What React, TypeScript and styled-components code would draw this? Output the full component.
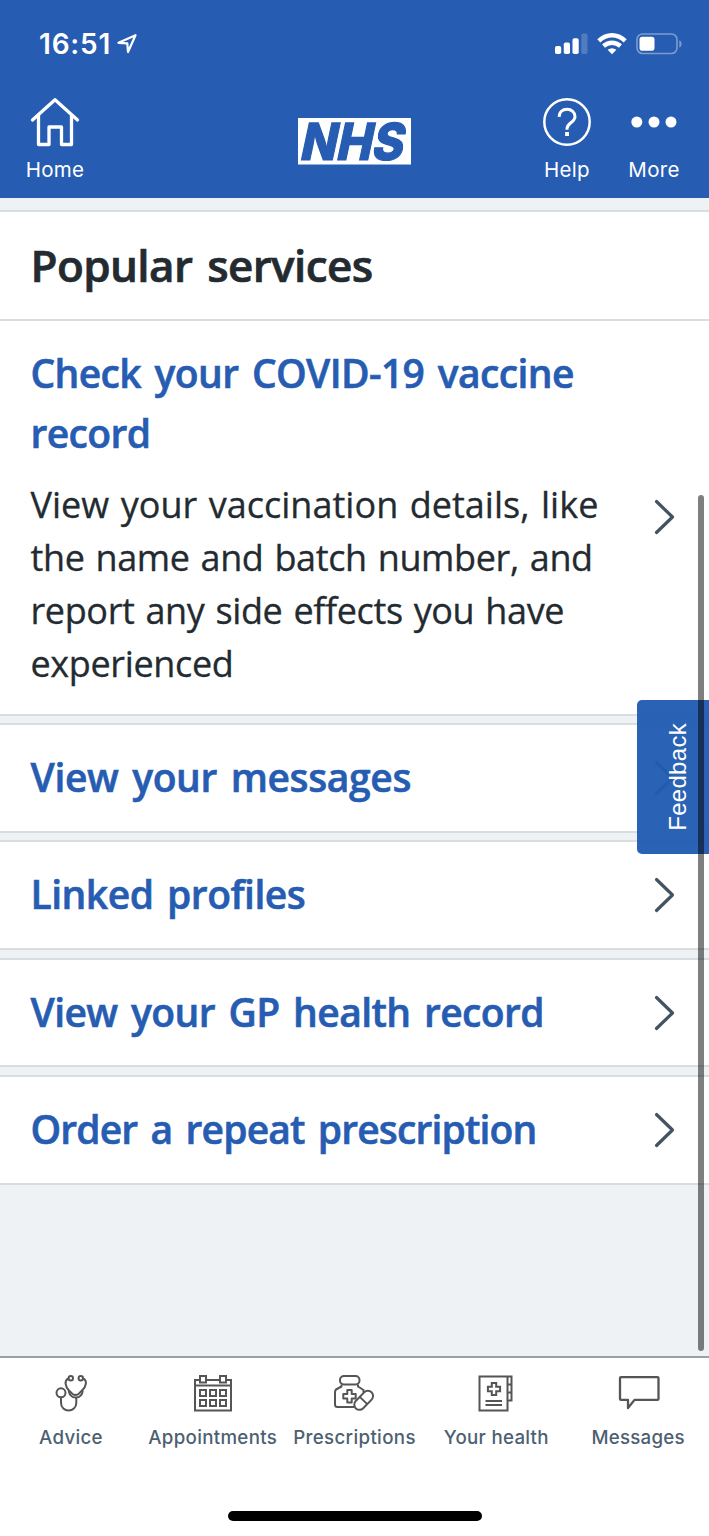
import React from "react";
import styled, { createGlobalStyle } from "styled-components";

const GlobalStyle = createGlobalStyle`
  * { box-sizing: border-box; }
  body { margin: 0; background: #fff; -webkit-font-smoothing: antialiased; }
  h1, h2, p { margin: 0; }
`;

const Screen = styled.div`
  position: relative;
  display: flex;
  flex-direction: column;
  width: 709px;
  height: 1536px;
  overflow: hidden;
  background: #eef2f4;
  font-family: "Open Sans", "Noto Sans", sans-serif;
`;

const Header = styled.header`
  flex: none;
  height: 198px;
  background: #265cb1;
  color: #fff;
  font-family: Inter, sans-serif;
`;

const StatusBar = styled.div`
  display: flex;
  align-items: center;
  justify-content: space-between;
  height: 88px;
  padding: 0 27px 0 39px;
`;

const Clock = styled.div`
  display: flex;
  align-items: center;
  gap: 6px;
  font-size: 28px;
  font-weight: 600;
  letter-spacing: 0.8px;
`;

const StatusIcons = styled.div`
  display: flex;
  align-items: center;
  gap: 9px;
`;

const TopBar = styled.div`
  display: grid;
  grid-template-columns: 110px 1fr 110px 64px 23px;
  height: 110px;
  padding-top: 8px;
`;

const TopButton = styled.div`
  display: flex;
  flex-direction: column;
  align-items: center;
  gap: 8px;
  font-size: 20.5px;
  line-height: 27px;
  letter-spacing: 0.3px;
`;

const LogoCell = styled.div`
  display: flex;
  padding: 22px 0 0 188px;
`;

const Logo = styled.svg`
  display: block;
  overflow: visible;
`;

const Main = styled.main`
  flex: none;
  display: flex;
  flex-direction: column;
  height: 1158px;
  padding-top: 11.5px;
`;

const SectionHead = styled.div`
  height: 109px;
  padding: 23px 30.5px 0;
  background: #fff;
  border-top: 2px solid #d8dddf;
`;

const SectionTitle = styled.h1<{ $spacing: number }>`
  color: #232b31;
  font-size: 44px;
  line-height: 60px;
  font-weight: 600;
  -webkit-text-stroke: 0.7px currentColor;
  letter-spacing: ${(p) => p.$spacing}px;
  word-spacing: 4px;
  white-space: nowrap;
`;

const Row = styled.section<{ $first?: boolean }>`
  display: flex;
  align-items: center;
  justify-content: space-between;
  height: ${(p) => (p.$first ? 397 : 109.7)}px;
  margin-bottom: 7.6px;
  padding: 0 33px 0 30.5px;
  background: #fff;
  border-top: 2px solid #d8dddf;
  border-bottom: 2px solid #d8dddf;
`;

const RowTitle = styled.h2<{ $spacing: number }>`
  padding-bottom: 2px;
  color: #265cb1;
  font-size: 39px;
  line-height: 60px;
  font-weight: 600;
  -webkit-text-stroke: 0.6px currentColor;
  letter-spacing: ${(p) => p.$spacing}px;
  word-spacing: 4px;
  white-space: nowrap;
`;

const Line = styled.span<{ $spacing: number }>`
  display: block;
  letter-spacing: ${(p) => p.$spacing}px;
  white-space: nowrap;
`;

const Description = styled.p`
  margin-top: 13px;
  padding-bottom: 1px;
  color: #232b31;
  font-size: 36px;
  line-height: 53px;
  word-spacing: 2px;
  -webkit-text-stroke: 0.3px currentColor;
`;

const TabBar = styled.nav`
  flex: 1;
  display: grid;
  grid-template-columns: repeat(5, 141.8px);
  align-items: start;
  padding-top: 16px;
  background: #fff;
  border-top: 2px solid #98a1a8;
`;

const Tab = styled.div<{ $spacing: number }>`
  display: flex;
  flex-direction: column;
  align-items: center;
  gap: 12px;
  color: #4c6072;
  font-family: Inter, sans-serif;
  font-size: 18.7px;
  font-weight: 500;
  line-height: 27px;
  letter-spacing: ${(p) => p.$spacing}px;
  white-space: nowrap;
`;

const Feedback = styled.div`
  position: absolute;
  top: 700px;
  right: 0;
  display: flex;
  align-items: center;
  justify-content: center;
  width: 72px;
  height: 154px;
  padding-left: 10px;
  border-radius: 5px 0 0 5px;
  background: rgba(34, 92, 178, 0.965);
  color: #fff;
  font-family: "Liberation Sans", sans-serif;
  font-size: 24px;
  letter-spacing: 0.3px;
`;

const FeedbackLabel = styled.span`
  writing-mode: vertical-rl;
  transform: rotate(180deg);
`;

const ScrollThumb = styled.div`
  position: absolute;
  top: 495px;
  left: 697.5px;
  width: 6px;
  height: 856px;
  border-radius: 3px;
  background: rgba(0, 0, 0, 0.5);
`;

const HomeIndicator = styled.div`
  position: absolute;
  left: 228px;
  top: 1511px;
  width: 254px;
  height: 10px;
  border-radius: 5px;
  background: #000;
`;

const Chevron = () => (
  <svg width="22" height="36" viewBox="0 0 22 36" fill="none" stroke="#435363" strokeWidth="3.2" strokeLinecap="round" strokeLinejoin="round">
    <path d="M2.5 2.5 18.5 18 2.5 33.5" />
  </svg>
);

const LocationIcon = () => (
  <svg width="20" height="20" viewBox="0 0 20 20" fill="none" stroke="#fff" strokeWidth="2.2" strokeLinejoin="round">
    <path d="M1.5 8.8 18.5 1.2 11 18 10.3 9.3Z" />
  </svg>
);

const Signal = () => (
  <svg width="33" height="22" viewBox="0 0 33 22" fill="#fff">
    <rect x="0" y="13" width="6.2" height="8" rx="1.8" />
    <rect x="8.8" y="9.5" width="6.2" height="11.5" rx="1.8" />
    <rect x="17.5" y="5.3" width="6.2" height="15.7" rx="1.8" />
    <rect x="26.3" y="0.5" width="6.2" height="20.5" rx="1.8" opacity="0.2" />
  </svg>
);

const Wifi = () => (
  <svg width="30" height="22" viewBox="0 0 30 22" fill="none" stroke="#fff" strokeWidth="4.4">
    <path d="M1.8 7.9Q7.8 2.3 15 2.3t13.2 5.6" />
    <path d="M6.5 13Q10.3 9.7 15 9.7t8.5 3.3" />
    <path d="M10.6 16.8Q15 13.8 19.4 16.8L15 21.2Z" fill="#fff" stroke="none" />
  </svg>
);

const Battery = () => (
  <svg width="46" height="22" viewBox="0 0 46 22" fill="none">
    <rect x="1" y="1" width="40" height="19.5" rx="5.5" stroke="#7d9dd0" strokeWidth="1.6" />
    <rect x="3.5" y="3.7" width="15" height="14" rx="2.8" fill="#fff" />
    <path d="M43.3 7.3c3 1.2 3 6 0 7.2Z" fill="#7d9dd0" />
  </svg>
);

const HomeIcon = () => (
  <svg width="50" height="52" viewBox="0 0 50 52" fill="none" stroke="#fff" strokeWidth="3.3" strokeLinecap="round" strokeLinejoin="round">
    <path d="M2.5 24 25 3.7 47.5 24" />
    <path d="M8.5 19.5V48.5H19V31H31.5V48.5H41.5V19.5" />
  </svg>
);

const HelpIcon = () => (
  <svg width="50" height="52" viewBox="0 0 50 52" fill="none" stroke="#fff">
    <circle cx="25" cy="26" r="22.7" strokeWidth="2.5" />
    <path d="M17.3 20.8C17 16 20.5 13.3 25 13.3s8 3 8 7.2c0 6-8 6.5-8 12v1.3" strokeWidth="3" />
    <rect x="23.1" y="36" width="3.9" height="4" fill="#fff" stroke="none" />
  </svg>
);

const MoreIcon = () => (
  <svg width="50" height="52" viewBox="0 0 50 52" fill="#fff">
    <circle cx="7.8" cy="26" r="5.5" />
    <circle cx="25" cy="26" r="5.5" />
    <circle cx="42" cy="26" r="5.5" />
  </svg>
);

const TabIcon = styled.svg.attrs({ width: 44, height: 38, viewBox: "0 0 44 38", fill: "none", stroke: "#555" })`
  stroke-width: 2;
`;

const AdviceIcon = () => (
  <TabIcon>
    <circle cx="12" cy="18.8" r="4.5" />
    <circle cx="21.8" cy="4.2" r="2.2" />
    <circle cx="31.8" cy="4.2" r="2.2" />
    <path d="M19.5 4.4C15 6.5 16 12 20 16.5L23.5 20Q26.5 22 29.5 20L33 16.5C37.5 12 38.5 6.5 34 4.4" />
    <path d="M19.7 16.5Q20.5 23.5 26.8 23.5T33.8 16.5" />
    <path d="M12 23.3v5.4c0 10.5 15.3 10.5 15.3 0v-5.2" />
  </TabIcon>
);

const CalendarIcon = () => (
  <TabIcon>
    <path d="M9 6H4V36.5H40V6H35M15 6H29M4 11.5H40" />
    <path d="M9 2h6v6.5H9ZM29 2h6v6.5H29Z" />
    <path d="M9 16h6v6H9ZM19 16h6v6H19ZM29 16h6v6H29ZM9 26h6v6H9ZM19 26h6v6H19ZM29 26h6v6H29Z" />
  </TabIcon>
);

const PrescriptionIcon = () => (
  <TabIcon strokeLinejoin="round">
    <rect x="8" y="2" width="19.5" height="8.5" rx="4" />
    <path d="M9.5 10.5v2L4 15.5Q3 16.5 3 18.5V30.5Q3 33 5.5 33H22M26 10.5v2l5.5 3.5v2.5" />
    <path d="M15.3 16h4.4v4h4v4.4h-4v4h-4.4v-4h-4v-4.4h4Z" />
    <g transform="rotate(-46 31.5 26.5)"><rect x="20.5" y="21.3" width="22.5" height="10.4" rx="5.2" fill="#fff" /><path d="M31.5 21.3v10.4" /></g>
  </TabIcon>
);

const HealthIcon = () => (
  <TabIcon>
    <path d="M5.5 2.5H33.5V36.5H5.5ZM33.5 2.5h4V26.5H33.5M33.5 10.5h4M33.5 18.5h4" />
    <path d="M17.8 9h4.4v3.8h3.9v4.4h-3.9v3.9h-4.4v-3.9h-3.9v-4.4h3.9ZM11.5 27H28M11.5 31H28" />
  </TabIcon>
);

const MessageIcon = () => (
  <TabIcon strokeLinejoin="round">
    <path d="M5 3.2H41.5Q42.5 3.2 42.5 4.2V24.9Q42.5 25.9 41.5 25.9H18.5L12 34V25.9H5Q4 25.9 4 24.9V4.2Q4 3.2 5 3.2Z" strokeWidth="2.3" />
  </TabIcon>
);

const rows = [
  { title: "View your messages", spacing: -0.38 },
  { title: "Linked profiles", spacing: -0.5 },
  { title: "View your GP health record", spacing: -0.6 },
  { title: "Order a repeat prescription", spacing: -0.86 },
];

const tabs = [
  { label: "Advice", spacing: 0.3, Icon: AdviceIcon },
  { label: "Appointments", spacing: 0.32, Icon: CalendarIcon },
  { label: "Prescriptions", spacing: 0.35, Icon: PrescriptionIcon },
  { label: "Your health", spacing: 0.3, Icon: HealthIcon },
  { label: "Messages", spacing: 0.25, Icon: MessageIcon },
];

export default function App() {
  return (
    <Screen>
      <GlobalStyle />
      <Header>
        <StatusBar>
          <Clock>16:51<LocationIcon /></Clock>
          <StatusIcons><Signal /><Wifi /><Battery /></StatusIcons>
        </StatusBar>
        <TopBar>
          <TopButton><HomeIcon />Home</TopButton>
          <LogoCell>
            <Logo width="113" height="47" viewBox="0 0 113 47">
              <rect width="113" height="46.5" fill="#fff" />
              <text x="0" y="41.5" transform="translate(9.5 0) skewX(-12)" textLength="103" lengthAdjust="spacingAndGlyphs" fill="#265cb1" stroke="#265cb1" strokeWidth="1.2" fontFamily="Inter" fontWeight="800" fontSize="51">NHS</text>
            </Logo>
          </LogoCell>
          <TopButton><HelpIcon />Help</TopButton>
          <TopButton><MoreIcon />More</TopButton>
        </TopBar>
      </Header>
      <Main>
        <SectionHead><SectionTitle $spacing={-0.6}>Popular services</SectionTitle></SectionHead>
        <Row $first>
          <div>
            <RowTitle $spacing={-0.62}>Check your COVID-19 vaccine<br />record</RowTitle>
            <Description>
              <Line $spacing={0.03}>View your vaccination details, like</Line>
              <Line $spacing={-0.38}>the name and batch number, and</Line>
              <Line $spacing={-0.37}>report any side effects you have</Line>
              <Line $spacing={-0.36}>experienced</Line>
            </Description>
          </div>
          <Chevron />
        </Row>
        {rows.map((r) => (
          <Row key={r.title}>
            <RowTitle $spacing={r.spacing}>{r.title}</RowTitle>
            <Chevron />
          </Row>
        ))}
      </Main>
      <TabBar>
        {tabs.map(({ label, spacing, Icon }) => (
          <Tab key={label} $spacing={spacing}><Icon />{label}</Tab>
        ))}
      </TabBar>
      <Feedback><FeedbackLabel>Feedback</FeedbackLabel></Feedback>
      <ScrollThumb />
      <HomeIndicator />
    </Screen>
  );
}
